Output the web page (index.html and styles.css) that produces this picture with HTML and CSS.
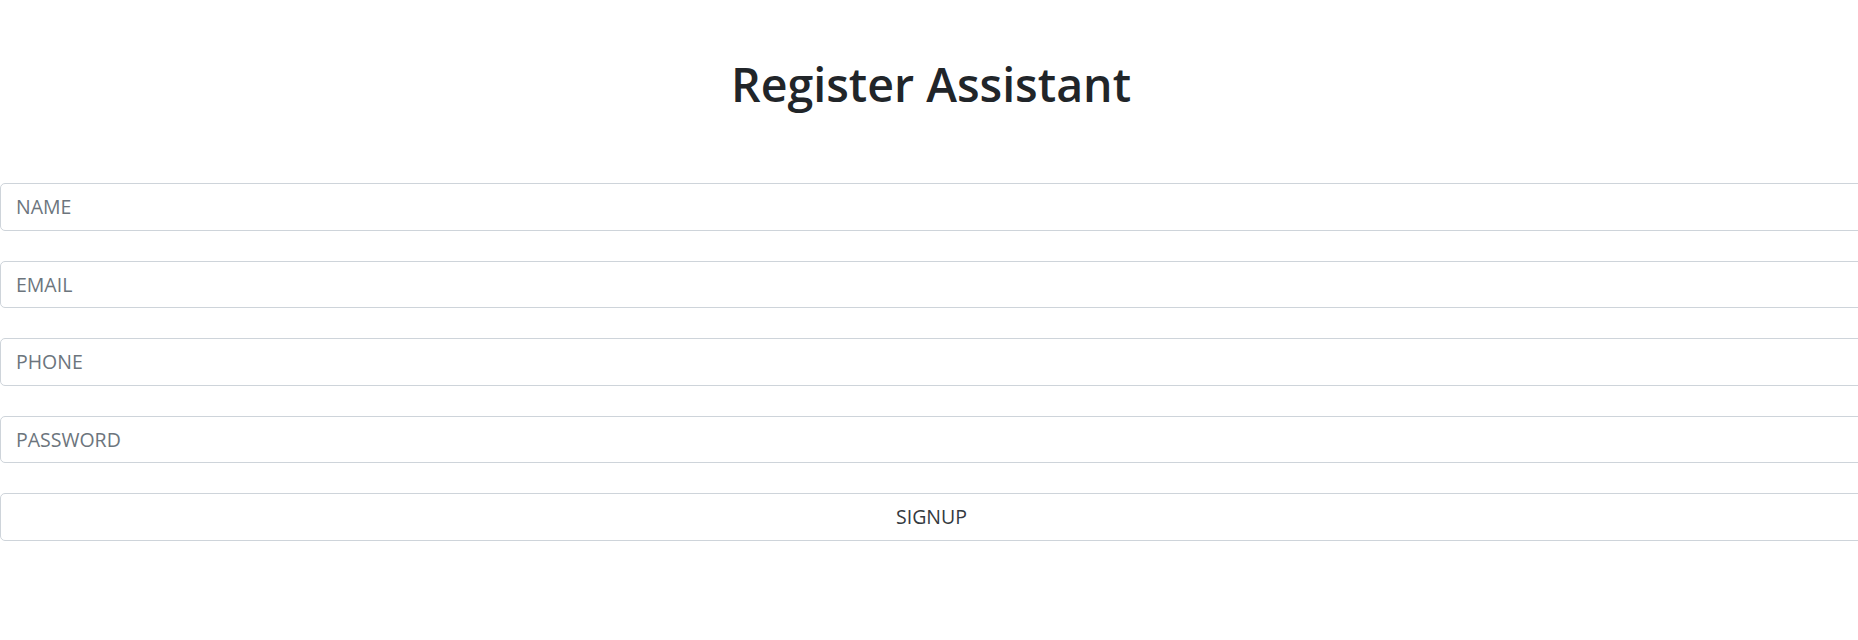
FILE: index.html
```html
<!DOCTYPE html>
<html lang="en">
<head>
<meta charset="utf-8">
<title>Register Assistant</title>
<link rel="stylesheet" href="styles.css">
</head>
<body>
<main class="page">
  <h1 class="title">Register Assistant</h1>
  <form class="form">
    <input class="field" type="text" placeholder="NAME">
    <input class="field" type="email" placeholder="EMAIL">
    <input class="field" type="tel" placeholder="PHONE">
    <input class="field" type="password" placeholder="PASSWORD">
    <button class="field submit" type="button">SIGNUP</button>
  </form>
</main>
</body>
</html>
```

FILE: styles.css
```css
html, body {
  margin: 0;
  padding: 0;
  background: #fff;
  overflow: hidden;
}
body {
  font-family: "Open Sans", "Noto Sans", sans-serif;
  color: #212529;
}
.page {
  display: flex;
  flex-direction: column;
  padding-top: 54px;
  overflow: hidden;
}
.title {
  margin: 0 0 69px 0;
  font-size: 46.5px;
  line-height: 60px;
  font-weight: 600;
  text-align: center;
  color: #212529;
  padding-left: 4px;
}
.form {
  display: flex;
  flex-direction: column;
  gap: 30px;
  width: calc(100% + 20px);
}
.field {
  box-sizing: border-box;
  height: 47.5px;
  width: 100%;
  margin: 0;
  padding: 0 15px;
  border: 1px solid #ced4da;
  border-radius: 5px;
  background: #fff;
  font-family: "Open Sans", "Noto Sans", sans-serif;
  font-size: 19.5px;
  color: #495057;
  outline: none;
}
.field::placeholder {
  color: #6c757d;
  opacity: 1;
}
.submit {
  color: #343a40;
  text-align: center;
  padding-right: 30px;
  cursor: pointer;
}
```
